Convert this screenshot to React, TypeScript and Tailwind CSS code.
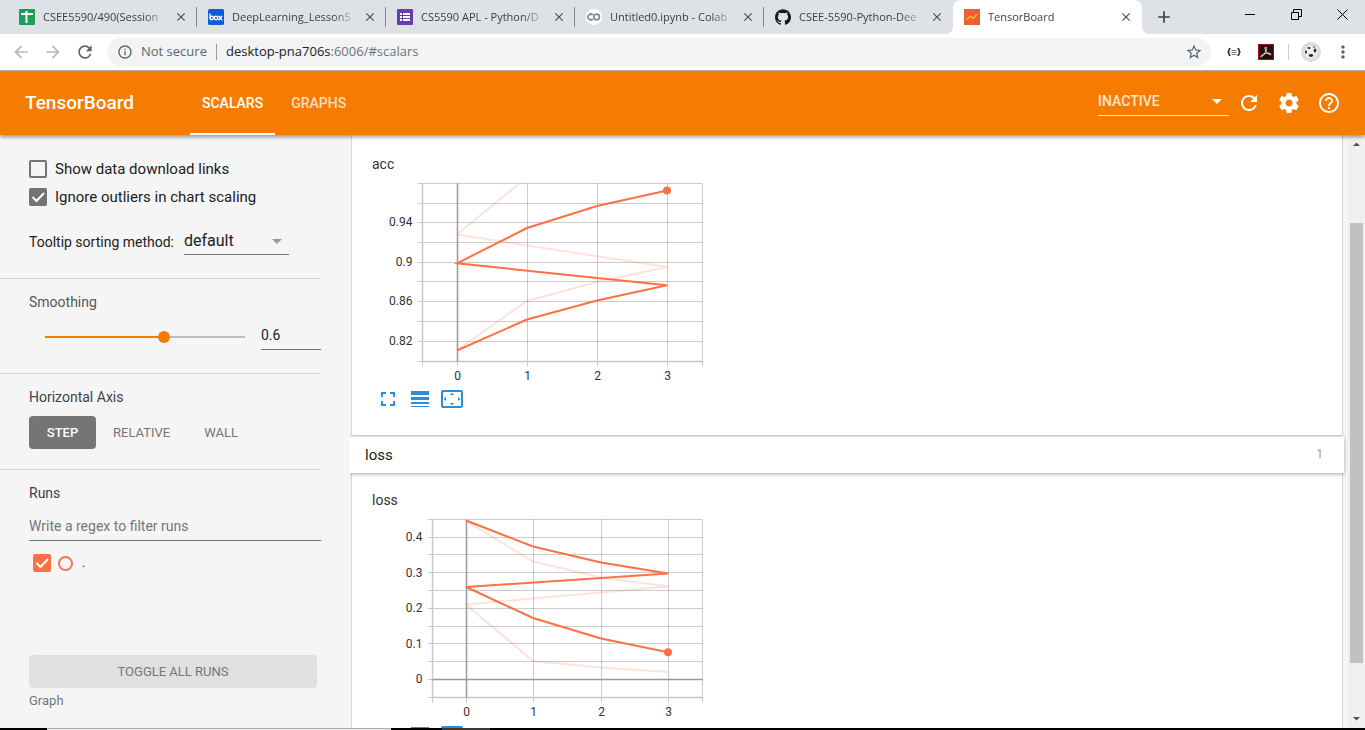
import { useState, type ReactNode } from "react";
import { SiGithub } from "react-icons/si";
import {
  MdArrowBack,
  MdArrowForward,
  MdRefresh,
  MdHelpOutline,
  MdInfoOutline,
  MdStarBorder,
  MdMoreVert,
  MdFullscreen,
  MdArrowDropDown,
  MdClose,
  MdAdd,
} from "react-icons/md";

const ACCENT = "#ff7043";

type Point = [number, number];

interface ChartProps {
  label: string;
  xLines: number[];
  xTicks: Point[];
  yLines: number[];
  yTicks: { y: number; text: string }[];
  zeroY?: number;
  raw: Point[];
  smooth: Point[];
}

const toPoints = (pts: Point[]) => pts.map((p) => p.join(",")).join(" ");

function Chart({ label, xLines, xTicks, yLines, yTicks, zeroY, raw, smooth }: ChartProps) {
  const left = xLines[0];
  const right = xLines[xLines.length - 1];
  const top = yLines[0];
  const bottom = yLines[yLines.length - 1];
  const last = smooth[smooth.length - 1];
  const clipId = `clip-${label}`;
  return (
    <svg
      width="340"
      height="210"
      viewBox="0 0 340 210"
      role="img"
      aria-label={`${label} chart`}
      className="block font-['Roboto',sans-serif] text-xs"
    >
      <clipPath id={clipId}>
        <rect x={left} y={top} width={right - left} height={bottom - top} />
      </clipPath>
      <g stroke="#000" strokeOpacity="0.2" strokeWidth="1">
        {yLines.map((y) => (
          <line key={y} x1={left - 5} x2={right} y1={y} y2={y} />
        ))}
        {xLines.map((x) => (
          <line key={x} x1={x} x2={x} y1={top} y2={bottom + 5} />
        ))}
      </g>
      <g stroke="#c8c8c8" strokeWidth="1.5">
        <line x1={left} x2={left} y1={top} y2={bottom} />
        <line x1={left} x2={right} y1={bottom} y2={bottom} />
      </g>
      <line x1={xTicks[0][0]} x2={xTicks[0][0]} y1={top} y2={bottom} stroke="#999" strokeWidth="1.5" />
      {zeroY !== undefined && (
        <line x1={left} x2={right} y1={zeroY} y2={zeroY} stroke="#999" strokeWidth="1.5" />
      )}
      <g fill="none" stroke={ACCENT} strokeWidth="2" clipPath={`url(#${clipId})`}>
        <polyline points={toPoints(raw)} strokeOpacity="0.2" />
        <polyline points={toPoints(smooth)} />
      </g>
      <circle cx={last[0]} cy={last[1]} r="4" fill={ACCENT} />
      <g fill="#333">
        {yTicks.map((t) => (
          <text key={t.text} x={left - 10} y={t.y + 4} textAnchor="end">
            {t.text}
          </text>
        ))}
        {xTicks.map(([x, v]) => (
          <text key={v} x={x} y={bottom + 18} textAnchor="middle">
            {v}
          </text>
        ))}
      </g>
    </svg>
  );
}

const accChart: ChartProps = {
  label: "acc",
  xLines: [50.5, 85.5, 155.5, 225.5, 295.5, 330.5],
  xTicks: [[85.5, 0], [155.5, 1], [225.5, 2], [295.5, 3]],
  yLines: [6.5, 26.5, 45.5, 65.5, 85.5, 104.5, 124.5, 144.5, 164.5, 184.5],
  yTicks: [
    { y: 45, text: "0.94" },
    { y: 85, text: "0.9" },
    { y: 124, text: "0.86" },
    { y: 164, text: "0.82" },
  ],
  raw: [[85, 173], [155, 124], [225, 105], [295, 90], [85, 57.5], [155, 0]],
  smooth: [[85, 173.5], [155, 142.5], [225, 123.5], [295, 108.3], [85, 86.3], [155, 51], [225, 29], [295, 13.5]],
};

const lossChart: ChartProps = {
  label: "loss",
  xLines: [60.5, 94.5, 161.5, 229.5, 296.5, 330.5],
  xTicks: [[94.5, 0], [161.5, 1], [229.5, 2], [296.5, 3]],
  yLines: [6.5, 24.5, 41.5, 59.5, 77.5, 95.5, 113.5, 130.5, 148.5, 166.5, 184.5],
  yTicks: [
    { y: 24, text: "0.4" },
    { y: 60, text: "0.3" },
    { y: 95, text: "0.2" },
    { y: 131, text: "0.1" },
    { y: 166, text: "0" },
  ],
  zeroY: 166.5,
  raw: [[94, 8], [161, 48.5], [229, 64.5], [296, 73.5], [94, 91.5], [161, 148], [229, 154.5], [296, 159]],
  smooth: [[94, 7.5], [161, 33.5], [229, 49.5], [296, 60.5], [94, 74], [161, 105], [229, 125.5], [296, 139.2]],
};

function ChartPanel({ chart }: { chart: ChartProps }) {
  return (
    <figure className="px-5">
      <figcaption className="text-sm leading-5 text-[#333]">{chart.label}</figcaption>
      <div className="pt-[3px]">
        <Chart {...chart} />
      </div>
      <div className="flex gap-2 pl-1 text-[#2a8fdb]">
        <button aria-label="Toggle full size" className="size-6">
          <MdFullscreen className="size-6" />
        </button>
        <button aria-label="Toggle y-axis log scale" className="size-6">
          <svg viewBox="0 0 24 24" fill="currentColor" className="size-6">
            <path d="M3 17h18v-2H3v2zm0 3h18v-1H3v1zm0-7h18v-3H3v3zm0-9v4h18V4H3z" />
          </svg>
        </button>
        <button aria-label="Fit domain to data" className="size-6">
          <svg viewBox="0 0 24 24" fill="currentColor" className="size-6">
            <path d="M12.01 5.5L10 8h4l-1.99-2.5zM18 10v4l2.5-1.99L18 10zM6 10l-2.5 2.01L6 14v-4zm8 6h-4l2.01 2.5L14 16zm7-13H3c-1.1 0-2 .9-2 2v14c0 1.1.9 2 2 2h18c1.1 0 2-.9 2-2V5c0-1.1-.9-2-2-2zm0 16.01H3V4.99h18v14.02z" />
          </svg>
        </button>
      </div>
    </figure>
  );
}

function SheetsIcon() {
  return (
    <svg viewBox="0 0 16 16" className="size-4">
      <rect width="16" height="16" rx="1" fill="#1b9e5a" />
      <path d="M2 5h12M7.5 2v12" stroke="#fff" strokeWidth="2" />
    </svg>
  );
}

function BoxIcon() {
  return (
    <svg viewBox="0 0 16 16" className="size-4">
      <rect width="16" height="16" rx="1.5" fill="#0a5fd6" />
      <g fill="none" stroke="#fff" strokeWidth="1.4" strokeLinecap="round">
        <path d="M2 5v4.2M10.9 7.3l2.9 3.4M13.8 7.3l-2.9 3.4" />
        <circle cx="3.7" cy="9" r="1.7" />
        <circle cx="8" cy="9" r="1.7" />
      </g>
    </svg>
  );
}

function FormsIcon() {
  return (
    <svg viewBox="0 0 16 16" className="size-4">
      <rect width="16" height="16" rx="1" fill="#673ab7" />
      <path d="M3 4h2v2H3zM6 4h7v2H6zM3 7h2v2H3zM6 7h7v2H6zM3 10h2v2H3zM6 10h7v2H6z" fill="#fff" />
    </svg>
  );
}

function ColabIcon() {
  return (
    <svg viewBox="0 0 16 16" className="size-4">
      <circle cx="8" cy="8" r="8" fill="#fff" />
      <g fill="none" stroke="#8a8a8a" strokeWidth="1.8">
        <path d="M6.8 6a2.8 2.8 0 1 0 0 4" />
        <circle cx="10.6" cy="8" r="2.8" />
      </g>
    </svg>
  );
}

function TensorBoardIcon() {
  return (
    <svg viewBox="0 0 16 16" className="size-4">
      <rect width="16" height="16" fill="#ea6132" />
      <path d="M3 10.5l3.5-3.5 2.5 2.5L13 5" fill="none" stroke="#ffb03a" strokeWidth="1.5" />
    </svg>
  );
}

const tabs: { title: string; icon: ReactNode; divider: boolean }[] = [
  { title: "CSEE5590/490(Session", icon: <SheetsIcon />, divider: true },
  { title: "DeepLearning_Lesson5", icon: <BoxIcon />, divider: true },
  { title: "CS5590 APL - Python/D", icon: <FormsIcon />, divider: true },
  { title: "Untitled0.ipynb - Colab", icon: <ColabIcon />, divider: true },
  { title: "CSEE-5590-Python-Dee", icon: <SiGithub className="size-4 text-[#161a1e]" />, divider: false },
];

function TabBody({ title, icon }: { title: string; icon: ReactNode }) {
  return (
    <>
      <span className="shrink-0">{icon}</span>
      <span className="ml-2 mr-1 min-w-0 flex-1 overflow-hidden whitespace-nowrap mask-r-from-80%">{title}</span>
      <button aria-label={`Close ${title}`} className="grid size-4 shrink-0 place-items-center text-[#4a4d51]">
        <MdClose className="size-3.5" />
      </button>
    </>
  );
}

function TabStrip() {
  return (
    <div className="flex h-[34px] shrink-0 bg-[#dee1e6] pl-2 font-['Open_Sans',sans-serif] text-[11px] text-[#3c4043]">
      {tabs.map((t) => (
        <div key={t.title} className="flex w-[189px] min-w-0 items-center">
          <div
            className={
              t.divider
                ? "flex h-5 w-full items-center border-r border-[#85888c] pl-[11px] pr-[7px]"
                : "flex h-5 w-full items-center pl-[11px] pr-2"
            }
          >
            <TabBody title={t.title} icon={t.icon} />
          </div>
        </div>
      ))}
      <div className="relative flex w-[189px] min-w-0 items-center rounded-t-lg bg-white pl-[11px] pr-2">
        <span className="absolute -left-2 bottom-0 size-2 bg-[radial-gradient(circle_at_0_0,transparent_8px,white_8px)]" />
        <span className="absolute -right-2 bottom-0 size-2 bg-[radial-gradient(circle_at_100%_0,transparent_8px,white_8px)]" />
        <TabBody title="TensorBoard" icon={<TensorBoardIcon />} />
      </div>
      <button aria-label="New tab" className="ml-3 text-[#3c4043]">
        <MdAdd className="size-5" />
      </button>
      <div className="ml-auto flex items-start text-black">
        <button aria-label="Minimize" className="grid h-7 w-[46px] place-items-center">
          <svg viewBox="0 0 11 11" className="size-[11px]">
            <path d="M0 5.5h10" stroke="currentColor" />
          </svg>
        </button>
        <button aria-label="Restore" className="grid h-7 w-[46px] place-items-center">
          <svg viewBox="0 0 11 11" fill="none" stroke="currentColor" className="size-[11px]">
            <path d="M.5 3.5h7v7h-7zM2.5 3.5v-3h8v7h-3" />
          </svg>
        </button>
        <button aria-label="Close window" className="grid h-7 w-[46px] place-items-center">
          <svg viewBox="0 0 11 11" fill="none" stroke="currentColor" className="size-[11px]">
            <path d="M.5.5l10 10M10.5.5l-10 10" />
          </svg>
        </button>
      </div>
    </div>
  );
}

function Toolbar() {
  return (
    <div className="flex h-[37px] shrink-0 items-center border-b border-[#c4b5ac] bg-white pl-[11px] pr-3 font-['Open_Sans',sans-serif] text-[#5f6368]">
      <div className="flex gap-3">
        <button aria-label="Back" className="text-[#b7b9bc]"><MdArrowBack className="size-5" /></button>
        <button aria-label="Forward" className="text-[#b7b9bc]"><MdArrowForward className="size-5" /></button>
        <button aria-label="Reload"><MdRefresh className="size-5" /></button>
      </div>
      <div className="ml-3 flex h-7 min-w-0 flex-1 items-center rounded-full bg-[#f1f3f4] pl-2.5 pr-2 text-[13px]">
        <MdInfoOutline className="size-4" />
        <span className="ml-2 w-[67px] whitespace-nowrap">Not secure</span>
        <span className="ml-2 h-4 w-px bg-[#9a9da1]" />
        <span className="ml-[9px] whitespace-nowrap text-[#70757a]">
          <span className="text-[#202124]">desktop-pna706s</span>:6006/#scalars
        </span>
        <button aria-label="Bookmark this page" className="ml-auto"><MdStarBorder className="size-[18px]" /></button>
      </div>
      <button aria-label="JSON viewer extension" className="ml-[15px] size-4">
        <svg viewBox="0 0 16 16" fill="none" stroke="#222" className="size-4">
          <path d="M4.5 4.5Q3 4.5 3 6Q3 8 1.5 8Q3 8 3 10Q3 11.5 4.5 11.5M11.5 4.5Q13 4.5 13 6Q13 8 14.5 8Q13 8 13 10Q13 11.5 11.5 11.5" strokeWidth="1.5" />
          <path d="M5.5 6.5h5M5.5 8.5h5M5.5 10.5h5" stroke="#777" />
        </svg>
      </button>
      <button aria-label="Adobe Acrobat" className="ml-4 size-4">
        <svg viewBox="0 0 16 16" className="size-4">
          <rect x=".5" y=".5" width="15" height="15" fill="#2a0a08" stroke="#9a1414" />
          <path d="M7.5 3c1.2-.6 1 2 .3 4S5 12.5 3.3 12.8s.8-2.6 4-3.3 5.7-.2 5.7.8-3-.2-4.6-2.6S6.6 3.6 7.5 3z" fill="none" stroke="#e8e0e0" />
        </svg>
      </button>
      <span className="ml-3.5 h-4 w-px bg-[#c9cbce]" />
      <button aria-label="Profile" className="ml-3 size-5">
        <svg viewBox="0 0 20 20" className="size-5">
          <circle cx="10" cy="10" r="10" fill="#dcdcdc" />
          <circle cx="10" cy="10" r="6.5" fill="#f0f0f0" />
          <g fill="#2a2a2a">
            <ellipse cx="8" cy="6" rx="1.6" ry="1" />
            <ellipse cx="14" cy="8.5" rx="1.3" ry="2" />
            <ellipse cx="5" cy="10" rx="1" ry="1.7" />
            <ellipse cx="10" cy="13.5" rx="2.2" ry="1.4" />
            <circle cx="13" cy="5" r=".8" />
          </g>
        </svg>
      </button>
      <button aria-label="Browser menu" className="ml-3"><MdMoreVert className="size-5" /></button>
    </div>
  );
}

function AppHeader() {
  return (
    <header className="relative z-10 flex h-16 shrink-0 items-stretch bg-[#f57c00] text-white shadow-[0_2px_4px_rgba(0,0,0,0.4)]">
      <h1 className="w-[190px] self-center pl-[25px] text-[19px] font-medium">TensorBoard</h1>
      <nav className="flex gap-1 text-sm font-medium">
        <a href="#scalars" className="flex items-center border-b-2 border-white px-3 pt-0.5">SCALARS</a>
        <a href="#graphs" className="flex items-center border-b-2 border-transparent px-3 pt-0.5 text-white/75">GRAPHS</a>
      </nav>
      <div className="ml-auto flex items-center pr-6">
        <div className="relative mr-2 flex w-[131px] pb-1">
          <select
            aria-label="Inactive dashboards"
            className="w-full appearance-none border-b border-white/80 bg-transparent py-1 text-sm font-medium text-white/80 outline-none"
          >
            <option>INACTIVE</option>
          </select>
          <MdArrowDropDown className="pointer-events-none absolute right-0 top-0.5 size-6" />
        </div>
        <div className="flex gap-4">
          <button aria-label="Reload data"><MdRefresh className="size-6" /></button>
          <button aria-label="Settings">
            <svg viewBox="0 0 24 24" fill="currentColor" className="size-6">
              <path d="M19.43 12.98c.04-.32.07-.64.07-.98s-.03-.66-.07-.98l2.11-1.65c.19-.15.24-.42.12-.64l-2-3.46c-.12-.22-.39-.3-.61-.22l-2.49 1c-.52-.4-1.08-.73-1.69-.98l-.38-2.65C14.46 2.18 14.25 2 14 2h-4c-.25 0-.46.18-.49.42l-.38 2.65c-.61.25-1.17.59-1.69.98l-2.49-1c-.23-.09-.49 0-.61.22l-2 3.46c-.13.22-.07.49.12.64l2.11 1.65c-.04.32-.07.65-.07.98s.03.66.07.98l-2.11 1.65c-.19.15-.24.42-.12.64l2 3.46c.12.22.39.3.61.22l2.49-1c.52.4 1.08.73 1.69.98l.38 2.65c.03.24.24.42.49.42h4c.25 0 .46-.18.49-.42l.38-2.65c.61-.25 1.17-.59 1.69-.98l2.49 1c.23.09.49 0 .61-.22l2-3.46c.12-.22.07-.49-.12-.64l-2.11-1.65zM12 15.5c-1.93 0-3.5-1.57-3.5-3.5s1.57-3.5 3.5-3.5 3.5 1.57 3.5 3.5-1.57 3.5-3.5 3.5z" />
            </svg>
          </button>
          <button aria-label="Help"><MdHelpOutline className="size-6" /></button>
        </div>
      </div>
    </header>
  );
}

function Checkbox({ id, defaultChecked, orange }: { id: string; defaultChecked?: boolean; orange?: boolean }) {
  return (
    <span className="relative grid size-[18px] shrink-0">
      <input
        id={id}
        type="checkbox"
        defaultChecked={defaultChecked}
        className={
          orange
            ? "peer size-[18px] appearance-none rounded-xs border-2 border-[#ff7043] checked:bg-[#ff7043]"
            : "peer size-[18px] appearance-none rounded-xs border-2 border-[#737373] checked:bg-[#737373]"
        }
      />
      <svg
        viewBox="0 0 18 18"
        className="pointer-events-none absolute inset-0 hidden size-[18px] peer-checked:block"
      >
        <path d="M3.5 9l4 4 7.5-8" fill="none" stroke="#fff" strokeWidth="2" />
      </svg>
    </span>
  );
}

function Sidebar() {
  const [smoothing, setSmoothing] = useState(0.6);
  const [axis, setAxis] = useState("STEP");
  const pct = smoothing * 100;
  return (
    <aside className="flex w-[350px] shrink-0 flex-col pr-[29px] text-sm leading-5 text-[#212121]">
      <section className="border-b border-[#d3d3d3] pb-[23px] pl-[29px] pt-5">
        <div className="flex h-7 items-center gap-2 text-[15px]">
          <Checkbox id="download-links" />
          <label htmlFor="download-links">Show data download links</label>
        </div>
        <div className="flex h-7 items-center gap-2 text-[15px]">
          <Checkbox id="ignore-outliers" defaultChecked />
          <label htmlFor="ignore-outliers">Ignore outliers in chart scaling</label>
        </div>
        <div className="mt-4 flex items-end gap-2.5">
          <label htmlFor="tooltip-sort" className="w-[145px] whitespace-nowrap pb-[3px]">Tooltip sorting method:</label>
          <div className="relative w-[105px] border-b border-[#737373]">
            <select id="tooltip-sort" className="h-[27px] w-full appearance-none bg-transparent text-base leading-6 outline-none">
              <option>default</option>
            </select>
            <MdArrowDropDown className="pointer-events-none absolute right-0 top-0.5 size-6 text-[#9a9a9a]" />
          </div>
        </div>
      </section>

      <section className="border-b border-[#d3d3d3] pb-[23px] pl-[29px] pt-[13px]">
        <h2 className="text-[#555]">Smoothing</h2>
        <div className="mt-[11px] flex items-center gap-4 pl-4">
          <input
            type="range"
            aria-label="Smoothing"
            min={0}
            max={1}
            step={0.01}
            value={smoothing}
            onChange={(e) => setSmoothing(Number(e.target.value))}
            style={{
              background: `linear-gradient(to right, #f57c00 ${pct}%, #bdbdbd ${pct}%)`,
            }}
            className="h-0.5 w-[200px] appearance-none [&::-webkit-slider-thumb]:size-3 [&::-webkit-slider-thumb]:appearance-none [&::-webkit-slider-thumb]:rounded-full [&::-webkit-slider-thumb]:bg-[#f57c00]"
          />
          <input
            aria-label="Smoothing value"
            value={smoothing}
            onChange={(e) => setSmoothing(Number(e.target.value) || 0)}
            className="w-[60px] border-b border-[#737373] bg-transparent pb-1 pt-0.5 outline-none"
          />
        </div>
      </section>

      <section className="border-b border-[#d3d3d3] pb-5 pl-[29px] pt-[13px]">
        <h2 className="text-[#424242]">Horizontal Axis</h2>
        <div className="mt-[9px] flex text-[13px]">
          {["STEP", "RELATIVE", "WALL"].map((name) => (
            <button
              key={name}
              onClick={() => setAxis(name)}
              className={
                axis === name
                  ? "h-[33px] min-w-[67px] rounded-sm bg-[#757575] px-[17px] font-medium text-white"
                  : "h-[33px] min-w-[67px] rounded-sm px-[17px] text-[#757575]"
              }
            >
              {name}
            </button>
          ))}
        </div>
      </section>

      <section className="flex min-h-0 flex-1 flex-col pl-[29px] pt-[13px]">
        <h2 className="text-[#424242]">Runs</h2>
        <input
          aria-label="Filter runs"
          placeholder="Write a regex to filter runs"
          className="mt-[11px] border-b border-[#737373] bg-transparent pb-1 pt-0.5 outline-none placeholder:text-[#757575]"
        />
        <div className="mt-[13px] flex items-center gap-[7px] pl-1">
          <Checkbox id="run-root" defaultChecked orange />
          <span className="size-[15px] rounded-full border-2 border-[#ee7563]" />
          <label htmlFor="run-root" className="pl-0.5 text-xs">.</label>
        </div>
        <div className="mt-auto pb-[17px] pr-1">
          <button className="block h-[33px] w-full rounded-sm bg-[#e0e0e0] text-[13px] text-[#757575]">
            TOGGLE ALL RUNS
          </button>
          <p className="mt-[3px] text-[13px] text-[#757575]">Graph</p>
        </div>
      </section>
    </aside>
  );
}

function Scrollbar() {
  return (
    <div aria-hidden="true" className="flex w-[17px] shrink-0 flex-col items-center bg-[#f0f0f0]">
      <svg viewBox="0 0 17 17" className="size-[17px]">
        <path d="M5 11h7L8.5 7.5z" fill="#505050" />
      </svg>
      <div className="flex w-[13px] flex-1 flex-col">
        <div className="flex-[71]" />
        <div className="flex-[440] bg-[#c1c1c1]" />
        <div className="flex-[48]" />
      </div>
      <svg viewBox="0 0 17 17" className="size-[17px]">
        <path d="M5 6h7L8.5 9.5z" fill="#505050" />
      </svg>
    </div>
  );
}

export default function App() {
  return (
    <div className="flex h-screen flex-col overflow-hidden bg-[#f5f5f5] font-['Roboto',sans-serif]">
      <TabStrip />
      <Toolbar />
      <AppHeader />
      <div className="flex min-h-0 flex-1">
        <Sidebar />
        <main className="min-w-0 flex-1 overflow-hidden pr-1">
          <section className="mx-px border border-t-0 border-[#d6d6d6] bg-white pb-6 pt-[19px]">
            <ChartPanel chart={accChart} />
          </section>
          <section>
            <button className="relative mt-px flex h-9 w-full items-center justify-between bg-white px-[15px] text-[15px] text-[#212121] shadow-[0_1px_4px_rgba(0,0,0,0.35)]">
              <span>loss</span>
              <span className="pb-0.5 pr-1.5 text-xs text-[#9a9a9a]">1</span>
            </button>
            <div className="mx-px border border-t-0 border-[#d6d6d6] bg-white pb-6 pt-[17px]">
              <ChartPanel chart={lossChart} />
            </div>
          </section>
        </main>
        <Scrollbar />
      </div>
      <footer aria-hidden="true" className="relative flex h-0.5 shrink-0 bg-black">
        <div className="w-[47px]" />
        <div className="w-[344px] border-t border-[#b0b0b0] bg-[#ececec]" />
        <div className="ml-[51px] w-12 bg-[#3a3a3a]" />
      </footer>
    </div>
  );
}
